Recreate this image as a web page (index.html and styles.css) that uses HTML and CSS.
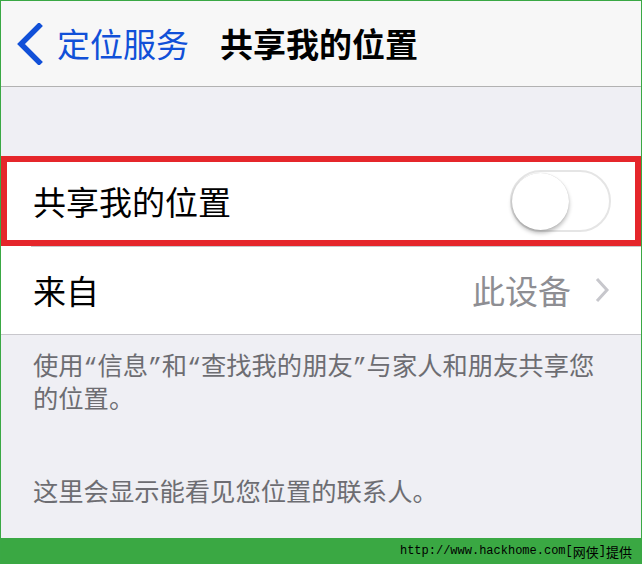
FILE: index.html
```html
<!DOCTYPE html>
<html lang="zh-CN">
<head>
  <meta charset="UTF-8" />
  <meta name="viewport" content="width=device-width, initial-scale=1.0" />
  <title>共享我的位置</title>
  <link rel="stylesheet" href="styles.css">
</head>
<body>
  <div class="screen">
    <div class="navbar">
      <div class="back">
        <svg class="back-arrow" width="28" height="42" viewBox="0 0 28 42">
          <polyline points="23,3 5,21 23,39" fill="none" stroke="#1150d8" stroke-width="5.5" stroke-linecap="square" stroke-linejoin="miter" />
        </svg>
        <span class="back-label">定位服务</span>
      </div>
      <div class="nav-title">共享我的位置</div>
    </div>

    <div class="group-gap"></div>

    <div class="cell cell-marked">
      <span class="cell-label">共享我的位置</span>
      <div class="switch">
        <div class="switch-knob"></div>
      </div>
    </div>
    <div class="cell cell-last">
      <span class="cell-label">来自</span>
      <span class="cell-value">此设备</span>
      <svg class="disclosure" width="18" height="28" viewBox="0 0 18 28">
        <polyline points="4,3 14,14 4,25" fill="none" stroke="#c7c7cc" stroke-width="3" />
      </svg>
    </div>

    <p class="group-footer">使用<span class="q">“</span>信息<span class="q">”</span>和<span class="q">“</span>查找我的朋友<span class="q">”</span>与家人和朋友共享您的位置。</p>
    <p class="group-footer group-note">这里会显示能看见您位置的联系人。</p>

    <div class="spacer"></div>

    <div class="watermark">
      <span class="wm-url">http://www.hackhome.com[</span><span class="wm-cn">网侠</span><span class="wm-url">]</span><span class="wm-cn">提供</span>
    </div>
  </div>
</body>
</html>
```

FILE: styles.css
```css
body {
  margin: 0;
  font-family: "Noto Sans CJK SC", "Noto Sans", sans-serif;
  background-color: #efeff4;
}
.screen {
  width: 642px;
  height: 564px;
  box-sizing: border-box;
  border: 1px solid #3aa844;
  border-bottom: none;
  display: flex;
  flex-direction: column;
  background-color: #efeff4;
  overflow: hidden;
}
.navbar {
  height: 85px;
  flex-shrink: 0;
  background-color: #f7f7f7;
  border-bottom: 1px solid #b2b2b2;
  display: flex;
  align-items: center;
}
.back {
  display: flex;
  align-items: center;
  margin-left: 15px;
  color: #1150d8;
}
.back-arrow {
  display: block;
}
.back-label {
  font-size: 33px;
  line-height: 1;
  margin-left: 13px;
}
.nav-title {
  font-size: 33px;
  line-height: 1;
  font-weight: bold;
  color: #000;
  margin-left: 31px;
}
.group-gap {
  height: 69px;
  flex-shrink: 0;
}
.cell {
  display: flex;
  align-items: center;
  background-color: #fff;
  flex-shrink: 0;
  box-sizing: border-box;
}
.cell-label {
  font-size: 33px;
  line-height: 1;
  color: #000;
}
.cell-marked {
  height: 90px;
  border: 6px solid #e5262b;
  padding: 0 24px 0 26px;
}
.cell-last {
  height: 89px;
  padding: 0 30px 0 32px;
  border-bottom: 1px solid #c8c7cc;
  background-image: linear-gradient(#c8c7cc, #c8c7cc);
  background-repeat: no-repeat;
  background-position: 30px 0;
  background-size: calc(100% - 30px) 1px;
}
.switch {
  margin-left: auto;
  width: 101px;
  height: 62px;
  box-sizing: border-box;
  border: 2px solid #e5e5e5;
  border-radius: 31px;
  background-color: #fff;
  display: flex;
  align-items: center;
}
.switch-knob {
  width: 57px;
  height: 57px;
  border-radius: 50%;
  background-color: #fff;
  box-shadow: 0 3px 4px rgba(0, 0, 0, 0.28), 0 0 1px rgba(0, 0, 0, 0.2);
}
.cell-value {
  margin-left: auto;
  font-size: 33px;
  line-height: 1;
  color: #8e8e93;
}
.disclosure {
  display: block;
  margin-left: 22px;
}
.group-footer {
  margin: 13px 0 0;
  padding: 0 28px 0 32px;
  font-size: 25.3px;
  line-height: 32px;
  color: #6d6d72;
}
/* narrow quotes, like the reference */
.group-footer .q {
  font-family: "Liberation Mono", monospace;
  font-size: 23px;
  line-height: 1;
}
.group-note {
  margin-top: 61px;
}
.spacer {
  flex: 1;
}
.watermark {
  height: 26px;
  flex-shrink: 0;
  margin: 0 -1px;
  background-color: #3aa843;
  display: flex;
  align-items: center;
  justify-content: flex-end;
  padding-right: 10px;
  color: #000;
}
.wm-url {
  font-family: "Liberation Mono", monospace;
  font-size: 12px;
}
.wm-cn {
  font-family: "Noto Sans CJK SC", sans-serif;
  font-size: 13px;
}
```
